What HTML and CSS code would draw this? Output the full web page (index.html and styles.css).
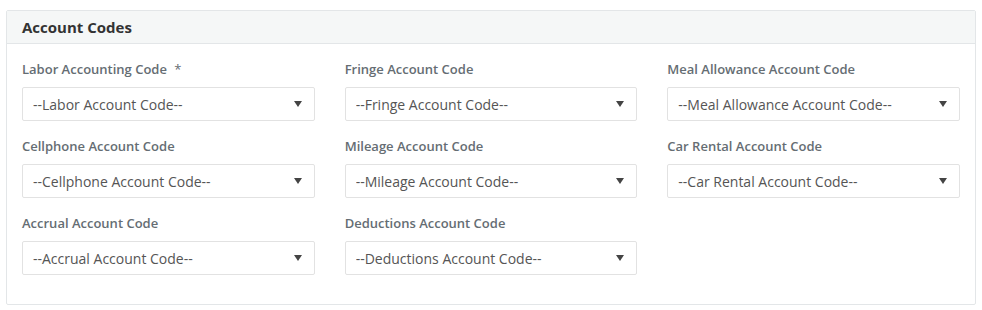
FILE: index.html
```html
<!DOCTYPE html>
<html lang="en">
<head>
    <meta charset="UTF-8">
    <meta name="viewport" content="width=device-width, initial-scale=1.0">
    <title>Account Codes</title>
    <link rel="stylesheet" href="styles.css">
</head>
<body>

<!-- Account Codes Panel -->
<div class="panel">
    <div class="panel-heading">Account Codes</div>
    <div class="panel-body">
        <div class="form-group">
            <label for="laborCode">Labor Accounting Code <span class="required">*</span></label>
            <div class="select-wrap">
                <select id="laborCode"><option>--Labor Account Code--</option></select>
            </div>
        </div>
        <div class="form-group">
            <label for="fringeCode">Fringe Account Code</label>
            <div class="select-wrap">
                <select id="fringeCode"><option>--Fringe Account Code--</option></select>
            </div>
        </div>
        <div class="form-group">
            <label for="mealCode">Meal Allowance Account Code</label>
            <div class="select-wrap">
                <select id="mealCode"><option>--Meal Allowance Account Code--</option></select>
            </div>
        </div>
        <div class="form-group">
            <label for="cellCode">Cellphone Account Code</label>
            <div class="select-wrap">
                <select id="cellCode"><option>--Cellphone Account Code--</option></select>
            </div>
        </div>
        <div class="form-group">
            <label for="mileageCode">Mileage Account Code</label>
            <div class="select-wrap">
                <select id="mileageCode"><option>--Mileage Account Code--</option></select>
            </div>
        </div>
        <div class="form-group">
            <label for="carCode">Car Rental Account Code</label>
            <div class="select-wrap">
                <select id="carCode"><option>--Car Rental Account Code--</option></select>
            </div>
        </div>
        <div class="form-group">
            <label for="accrualCode">Accrual Account Code</label>
            <div class="select-wrap">
                <select id="accrualCode"><option>--Accrual Account Code--</option></select>
            </div>
        </div>
        <div class="form-group">
            <label for="deductionsCode">Deductions Account Code</label>
            <div class="select-wrap">
                <select id="deductionsCode"><option>--Deductions Account Code--</option></select>
            </div>
        </div>
    </div>
</div>

</body>
</html>
```

FILE: styles.css
```css
/* Basic page styling */
body {
    font-family: "Open Sans", "Liberation Sans", sans-serif;
    margin: 10px 6px;
    background-color: #fff;
    color: #555;
}

/* Panel */
.panel {
    border: 1px solid #e3e6e8;
    border-radius: 2px;
    background-color: #fff;
}

.panel-heading {
    background-color: #f5f7f7;
    border-bottom: 1px solid #e3e6e8;
    height: 32px;
    line-height: 32px;
    padding: 0 15px;
    font-size: 15px;
    font-weight: 700;
    color: #333;
}

.panel-body {
    display: grid;
    grid-template-columns: repeat(3, 1fr);
    column-gap: 30px;
    padding: 15px 15px 14px;
}

/* Form fields */
.form-group {
    margin-bottom: 15px;
}

.form-group label {
    display: block;
    font-size: 13px;
    font-weight: 600;
    line-height: 20px;
    margin-bottom: 8px;
    color: #656d73;
}

.required {
    font-weight: 400;
    margin-left: 4px;
}

.select-wrap {
    position: relative;
}

.select-wrap select {
    display: block;
    width: 100%;
    height: 34px;
    padding: 0 30px 0 10px;
    border: 1px solid #e2e2e2;
    border-radius: 2px;
    background-color: #fff;
    font-family: inherit;
    font-size: 14px;
    color: #555;
    -webkit-appearance: none;
    appearance: none;
    box-sizing: border-box;
}

/* Dropdown arrow */
.select-wrap::after {
    content: "";
    position: absolute;
    right: 13px;
    top: 14px;
    border-left: 4px solid transparent;
    border-right: 4px solid transparent;
    border-top: 6px solid #444;
    pointer-events: none;
}
```
